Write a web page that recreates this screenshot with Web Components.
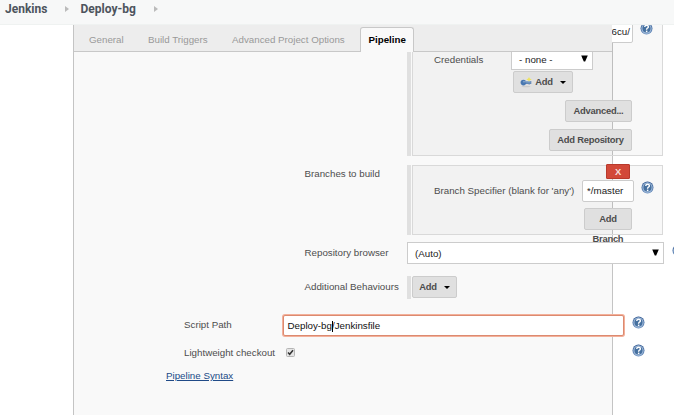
<!DOCTYPE html>
<html lang="en"><head><meta charset="utf-8"><title>Deploy-bg Config</title>
<style>html,body{margin:0;height:415px;overflow:hidden;background:#fff;font:9.75px/12px "Liberation Sans",Arial,sans-serif;color:#4d4d4d}</style></head>
<body><jenkins-page></jenkins-page>
<script>
function define(name, html){
  const t=document.createElement('template');
  t.innerHTML='<style>*{box-sizing:border-box}</style>'+html;
  customElements.define(name,class extends HTMLElement{
    constructor(){super();this.attachShadow({mode:'open'}).append(t.content.cloneNode(true));}
  });
}
define('help-icon',`<style>:host{display:block;flex:none;width:13px;height:13px}svg{display:block}</style>
<svg width="13" height="13" viewBox="0 0 13 13"><defs><linearGradient id="g" x2="0" y2="1"><stop stop-color="#2c548d"/><stop offset="1" stop-color="#6a90c0"/></linearGradient></defs>
<circle cx="6.5" cy="6.5" r="6" fill="url(#g)"/><circle cx="6.5" cy="6.5" r="4.6" fill="#45709f" stroke="#a5bddb" stroke-width="1.1"/>
<path d="M4.7 5Q4.8 3.3 6.6 3.3Q8.4 3.3 8.4 4.8Q8.4 5.7 7.4 6.2Q6.6 6.7 6.6 7.7" fill="none" stroke="#fff" stroke-width="1.4"/><rect x="5.9" y="8.6" width="1.5" height="1.5" fill="#fff"/></svg>`);
define('yui-button',`<style>:host{display:flex;box-sizing:border-box;flex:none;align-items:center;justify-content:center;gap:7px;height:22px;background:#e0e0e0;border:1px solid #ccc;border-radius:2px;font-weight:bold;font-size:9.4px;letter-spacing:-.24px;color:#4d4d4d;white-space:nowrap}
.c{display:none;width:0;height:0;border:3px solid transparent;border-top:3.5px solid #000;border-bottom:0}:host([menu]) .c{display:block}</style><slot name="icon"></slot><slot></slot><i class="c"></i>`);
define('key-icon',`<style>:host{display:block;width:12px;height:11px;margin-right:-4px}svg{display:block}</style><svg width="12" height="11" viewBox="0 0 12 11"><ellipse cx="6" cy="9.5" rx="4.5" ry=".8" fill="#ccc"/><path d="M5 4H11.3V7H9.8V7.6H8.5V7H5Z" fill="#6288b7"/><circle cx="3.4" cy="5.6" r="2.8" fill="#4978b1"/><path d="M3 4.8h7.6" stroke="#a3bedc" stroke-width=".8"/><path d="M9 0L9.8 1.6 11.7 2.4 9.8 3.3 9 4.8 8.2 3.3 6.3 2.4 8.2 1.6Z" fill="#eee45b"/></svg>`);
define('select-box',`<style>:host{display:flex;box-sizing:border-box;flex:none;align-items:center;justify-content:space-between;height:22px;border:1px solid #ccc;background:#fff;color:#222;padding:1px 4px 0 7px}svg{display:block;margin-top:-2px}</style><slot></slot><svg width="7" height="7"><path d="M.2 .5H6.8L4.2 6.5H2.8Z" fill="#000"/></svg>`);
define('text-field',`<style>:host{display:flex;box-sizing:border-box;flex:none;align-items:center;height:22px;border:1px solid #ccc;border-radius:2px;background:#fff;color:#222;padding:0 4px;overflow:hidden;white-space:nowrap}
:host([focused]){border:1px solid #dc8a70;box-shadow:0 0 0 1px #f3b09a;color:#111}</style><slot></slot>`);
define('check-box',`<style>:host{display:block;flex:none;width:9px;height:9px}svg{display:block}</style><svg width="9" height="9"><rect x=".5" y=".5" width="8" height="8" rx="1" fill="#e5e5e5" stroke="#b5b5b5"/><path d="M2 4.4L3.7 6.3L7 2.2" stroke="#333" stroke-width="1.5" fill="none"/></svg>`);
define('form-row',`<style>:host{display:flex;box-sizing:border-box;white-space:nowrap}.l{flex:none;width:var(--w);padding-top:var(--t,0)}</style><div class="l"><slot name="label"></slot></div><slot></slot>`);
define('repeated-chunk',`<style>:host{display:flex;flex:none;width:256px;gap:1px}.h{width:4px;background:#e0e0e0}.b{width:251px;border:1px solid #d9d9d9;background:rgba(0,0,0,.027)}:host([plain]) .b{border:0;background:none}:host([continued]) .b{border-top:0}</style><div class="h"></div><div class="b"><slot></slot></div>`);
define('bread-crumbs',`<style>:host{display:flex;position:relative;z-index:1;box-sizing:border-box;height:25px;background:#f7f8f8;border-bottom:1px solid #eff2f1;padding:2px 0 0 5px;font:bold 12px/14px Roboto,sans-serif;color:#4d545d}
span{display:block;white-space:nowrap}i{width:0;height:0;border:3px solid transparent;border-left:4px solid #bbb;border-right:0;margin-top:4px}</style>
<span style="width:60px">Jenkins</span><i style="margin-right:11.5px"></i><span style="width:73.5px">Deploy-bg</span><i></i>`);
define('config-tabs',`<style>:host{display:flex;box-sizing:border-box;align-items:flex-end;height:27px;width:538px;background:#ededed;box-shadow:inset 0 -1px #c8c8c8;color:#999}
span{display:block;height:18px;white-space:nowrap;flex:none}.a{height:25px;width:54px;border:1px solid #c8c8c8;border-bottom:0;border-radius:3px 3px 0 0;background:#f9f9f9;color:#000;font-weight:bold;padding:6px 0 0 7.5px}</style>
<span style="width:59px;margin-left:15px">General</span><span style="width:84px">Build Triggers</span><span style="width:128px">Advanced Project Options</span><span class="a">Pipeline</span>`);
define('jenkins-page',`<style>:host{display:block;position:relative;width:674px;height:415px;overflow:hidden}
main{display:block;width:540px;height:390px;margin-left:73px;border:solid #c4c4c4;border-width:0 1px;background:#f9f9f9}
config-tabs{position:absolute;left:74px;top:25px}
.top{display:flex;height:18px;justify-content:flex-end;align-items:flex-end;gap:7px;padding-right:9px}
.top help-icon{margin-bottom:8px}.top text-field{width:52px;padding:0 3px 0 29.5px}
.acts{display:flex;flex-direction:column;align-items:flex-end;gap:7px;padding:7px 30px 0 0}
a{color:#204a87;text-decoration:underline}</style>
<bread-crumbs></bread-crumbs><main>
<form-row style="--w:333px;height:131px"><repeated-chunk continued style="height:131px">
 <div class="top"><text-field>6cu/</text-field><help-icon></help-icon></div>
 <form-row style="--w:77.5px;--t:6px;margin:5px 0 0 21px"><span slot="label">Credentials</span><select-box style="width:82px;margin-left:-.5px">- none -</select-box></form-row>
 <yui-button menu style="width:60px;margin:1px 0 0 100px"><key-icon slot="icon"></key-icon>Add</yui-button>
 <div class="acts"><yui-button style="width:67px">Advanced...</yui-button><yui-button style="width:83px">Add Repository</yui-button></div>
</repeated-chunk></form-row>
<form-row style="--w:102.5px;--t:3px;padding-left:230.5px;margin-top:9px;height:70px"><span slot="label">Branches to build</span><repeated-chunk>
 <yui-button style="width:24px;height:15px;margin:-2px 0 0 193px;background:#d24939;border-color:#b83a2c;color:#f7dedb;border-radius:1px">X</yui-button>
 <form-row style="--w:148px;--t:5px;margin:1px 0 0 21px"><span slot="label">Branch Specifier (blank for 'any')</span><text-field style="width:52px">*/master</text-field><help-icon style="margin:1px 0 0 7px"></help-icon></form-row>
 <yui-button style="width:48px;height:22px;margin:6px 0 0 171px">Add</yui-button><b style="display:block;margin:3px 0 0 179.5px;font-size:9.4px;letter-spacing:-.24px">Branch</b>
</repeated-chunk></form-row>
<form-row style="--w:102.5px;--t:5px;padding-left:230.5px;margin-top:7px;height:22px"><span slot="label">Repository browser</span><select-box style="width:257px;position:relative">(Auto)</select-box><help-icon style="margin:2px 0 0 8px"></help-icon></form-row>
<form-row style="--w:102.5px;--t:5px;padding-left:230.5px;margin-top:12px;height:23px"><span slot="label">Additional Behaviours</span><repeated-chunk plain><yui-button menu style="width:45px">Add</yui-button></repeated-chunk></form-row>
<form-row style="--w:99px;--t:4px;padding-left:110px;margin-top:16px;height:21px"><span slot="label">Script Path</span><text-field focused style="width:341px;height:21px;padding:1px 0 0 3.5px">Deploy-bg<i style="width:1px;height:11px;background:#000;margin-right:-1px"></i>/Jenkinsfile</text-field><help-icon style="margin:1px 0 0 7.5px"></help-icon></form-row>
<form-row style="--w:102px;--t:3px;padding-left:110px;margin-top:8px;height:16px"><span slot="label">Lightweight checkout</span><check-box style="margin:3.5px 336.5px 0 0"></check-box><help-icon></help-icon></form-row>
<form-row style="--w:100px;margin:10px 0 0 92px"><a slot="label">Pipeline Syntax</a></form-row>
</main><config-tabs></config-tabs>`);
</script></body></html>
